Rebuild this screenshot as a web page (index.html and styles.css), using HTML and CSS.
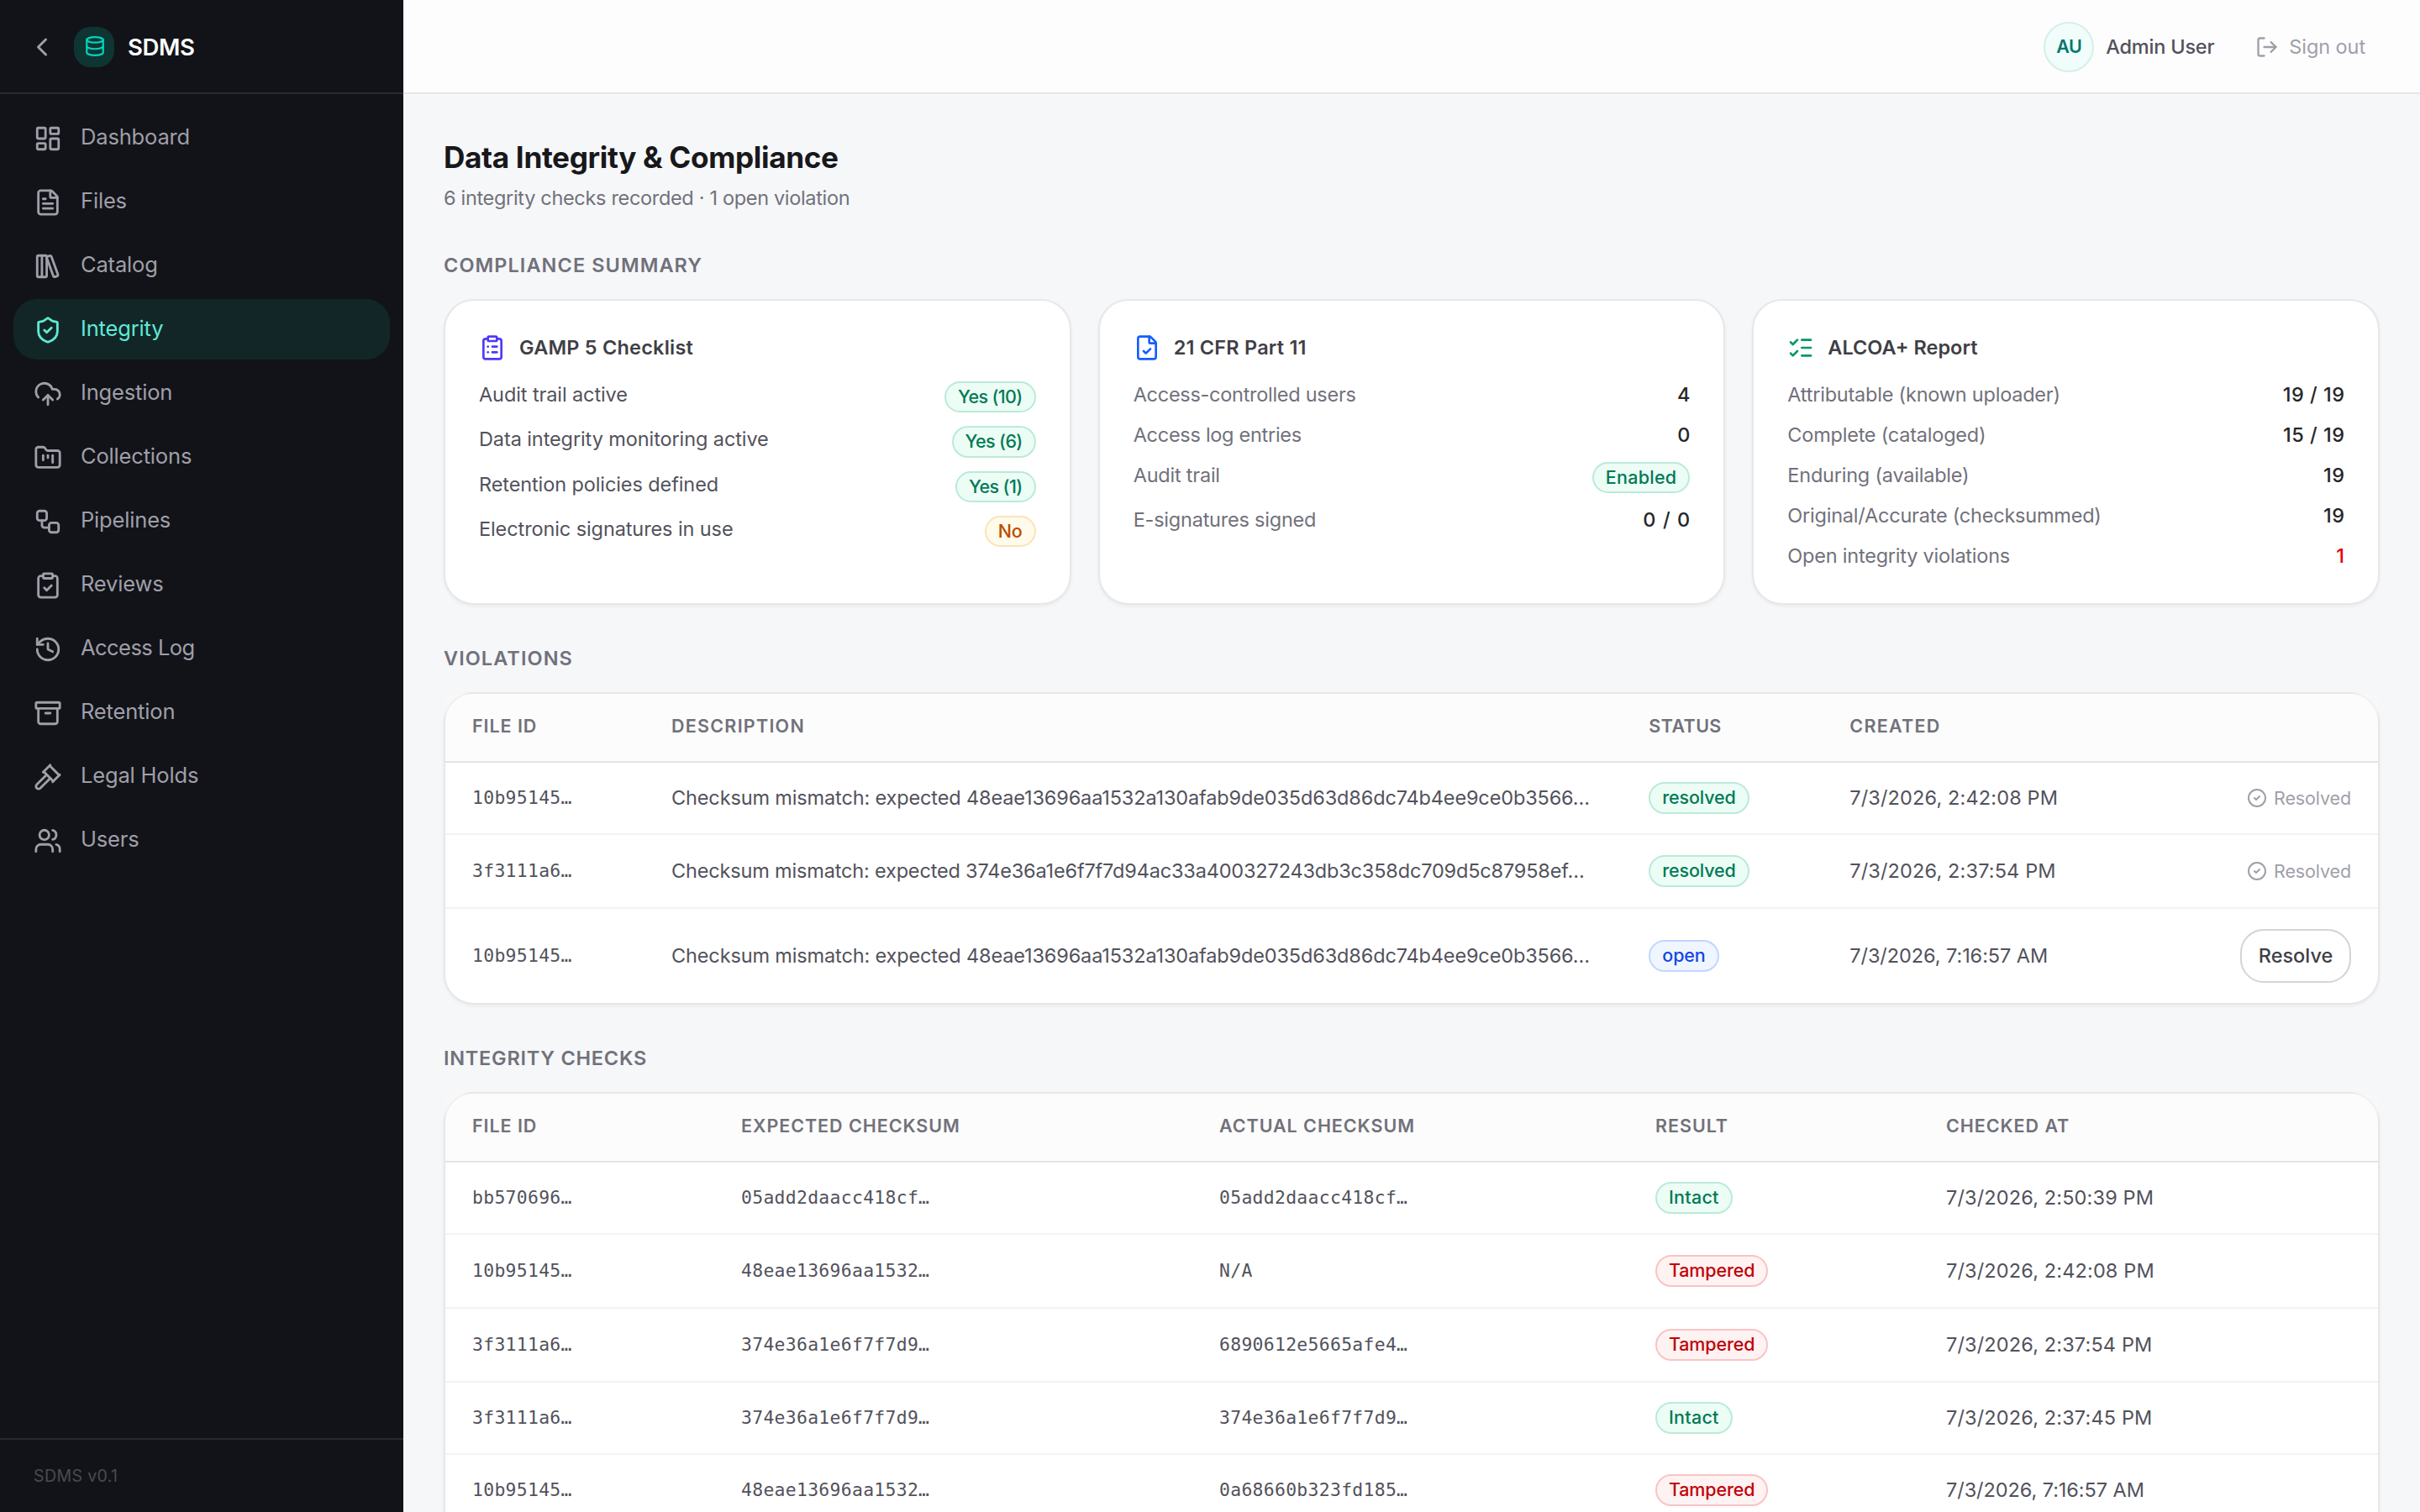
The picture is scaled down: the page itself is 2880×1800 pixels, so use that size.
FILE: index.html
```html
<!DOCTYPE html>
<html lang="en">
<head>
<meta charset="utf-8">
<title>SDMS – Data Integrity &amp; Compliance</title>
<link rel="stylesheet" href="styles.css">
</head>
<body>
<svg class="sprite" aria-hidden="true">
  <symbol id="chevron-left" viewBox="0 0 24 24"><path d="m15 18-6-6 6-6"/></symbol>
  <symbol id="database" viewBox="0 0 24 24"><ellipse cx="12" cy="5" rx="9" ry="3"/><path d="M3 5V19A9 3 0 0 0 21 19V5"/><path d="M3 12A9 3 0 0 0 21 12"/></symbol>
  <symbol id="dashboard" viewBox="0 0 24 24"><rect width="7" height="9" x="3" y="3" rx="1"/><rect width="7" height="5" x="14" y="3" rx="1"/><rect width="7" height="9" x="14" y="12" rx="1"/><rect width="7" height="5" x="3" y="16" rx="1"/></symbol>
  <symbol id="file-text" viewBox="0 0 24 24"><path d="M6 22a2 2 0 0 1-2-2V4a2 2 0 0 1 2-2h8a2.4 2.4 0 0 1 1.704.706l3.588 3.588A2.4 2.4 0 0 1 20 8v12a2 2 0 0 1-2 2z"/><path d="M14 2v5a1 1 0 0 0 1 1h5"/><path d="M10 9H8"/><path d="M16 13H8"/><path d="M16 17H8"/></symbol>
  <symbol id="library" viewBox="0 0 24 24"><rect width="8" height="18" x="3" y="3" rx="1"/><path d="M7 3v18"/><path d="M20.4 18.9c.2.5-.1 1.1-.6 1.3l-1.9.7c-.5.2-1.1-.1-1.3-.6L11.1 5.1c-.2-.5.1-1.1.6-1.3l1.9-.7c.5-.2 1.1.1 1.3.6Z"/></symbol>
  <symbol id="shield-check" viewBox="0 0 24 24"><path d="M20 13c0 5-3.5 7.5-7.66 8.95a1 1 0 0 1-.67-.01C7.5 20.5 4 18 4 13V6a1 1 0 0 1 1-1c2 0 4.5-1.2 6.24-2.72a1.17 1.17 0 0 1 1.52 0C14.51 3.81 17 5 19 5a1 1 0 0 1 1 1z"/><path d="m9 12 2 2 4-4"/></symbol>
  <symbol id="cloud-upload" viewBox="0 0 24 24"><path d="M12 13v8"/><path d="M4 14.899A7 7 0 1 1 15.71 8h1.79a4.5 4.5 0 0 1 2.5 8.242"/><path d="m8 17 4-4 4 4"/></symbol>
  <symbol id="folder-kanban" viewBox="0 0 24 24"><path d="M4 20h16a2 2 0 0 0 2-2V8a2 2 0 0 0-2-2h-7.93a2 2 0 0 1-1.66-.9l-.82-1.2A2 2 0 0 0 7.93 3H4a2 2 0 0 0-2 2v13c0 1.1.9 2 2 2Z"/><path d="M8 10v4"/><path d="M12 10v2"/><path d="M16 10v6"/></symbol>
  <symbol id="workflow" viewBox="0 0 24 24"><rect width="8" height="8" x="3" y="3" rx="2"/><path d="M7 11v4a2 2 0 0 0 2 2h4"/><rect width="8" height="8" x="13" y="13" rx="2"/></symbol>
  <symbol id="clipboard-check" viewBox="0 0 24 24"><rect width="8" height="4" x="8" y="2" rx="1"/><path d="M16 4h2a2 2 0 0 1 2 2v14a2 2 0 0 1-2 2H6a2 2 0 0 1-2-2V6a2 2 0 0 1 2-2h2"/><path d="m9 14 2 2 4-4"/></symbol>
  <symbol id="history" viewBox="0 0 24 24"><path d="M3 12a9 9 0 1 0 9-9 9.75 9.75 0 0 0-6.74 2.74L3 8"/><path d="M3 3v5h5"/><path d="M12 7v5l4 2"/></symbol>
  <symbol id="archive" viewBox="0 0 24 24"><rect width="20" height="5" x="2" y="3" rx="1"/><path d="M4 8v11a2 2 0 0 0 2 2h12a2 2 0 0 0 2-2V8"/><path d="M10 12h4"/></symbol>
  <symbol id="gavel" viewBox="0 0 24 24"><path d="m14 13-8.381 8.38a1 1 0 0 1-3.001-3l8.384-8.381"/><path d="m16 16 6-6"/><path d="m21.5 10.5-8-8"/><path d="m8 8 6-6"/><path d="m8.5 7.5 8 8"/></symbol>
  <symbol id="users" viewBox="0 0 24 24"><path d="M16 21v-2a4 4 0 0 0-4-4H6a4 4 0 0 0-4 4v2"/><path d="M16 3.128a4 4 0 0 1 0 7.744"/><path d="M22 21v-2a4 4 0 0 0-3-3.87"/><circle cx="9" cy="7" r="4"/></symbol>
  <symbol id="log-out" viewBox="0 0 24 24"><path d="m16 17 5-5-5-5"/><path d="M21 12H9"/><path d="M9 21H5a2 2 0 0 1-2-2V5a2 2 0 0 1 2-2h4"/></symbol>
  <symbol id="clipboard-list" viewBox="0 0 24 24"><rect width="8" height="4" x="8" y="2" rx="1"/><path d="M16 4h2a2 2 0 0 1 2 2v14a2 2 0 0 1-2 2H6a2 2 0 0 1-2-2V6a2 2 0 0 1 2-2h2"/><path d="M12 11h4"/><path d="M12 16h4"/><path d="M8 11h.01"/><path d="M8 16h.01"/></symbol>
  <symbol id="file-check" viewBox="0 0 24 24"><path d="M6 22a2 2 0 0 1-2-2V4a2 2 0 0 1 2-2h8a2.4 2.4 0 0 1 1.704.706l3.588 3.588A2.4 2.4 0 0 1 20 8v12a2 2 0 0 1-2 2z"/><path d="M14 2v5a1 1 0 0 0 1 1h5"/><path d="m9 15 2 2 4-4"/></symbol>
  <symbol id="list-checks" viewBox="0 0 24 24"><path d="M13 5h8"/><path d="M13 12h8"/><path d="M13 19h8"/><path d="m3 17 2 2 4-4"/><path d="m3 7 2 2 4-4"/></symbol>
  <symbol id="circle-check" viewBox="0 0 24 24"><circle cx="12" cy="12" r="10"/><path d="m9 12 2 2 4-4"/></symbol>
</svg>

<div class="app">
  <aside class="sidebar">
    <div class="brand">
      <svg class="icon brand-back"><use href="#chevron-left"/></svg>
      <span class="brand-logo"><svg class="icon"><use href="#database"/></svg></span>
      <span class="brand-name">SDMS</span>
    </div>
    <nav class="nav">
      <a class="nav-item"><svg class="icon"><use href="#dashboard"/></svg><span>Dashboard</span></a>
      <a class="nav-item"><svg class="icon"><use href="#file-text"/></svg><span>Files</span></a>
      <a class="nav-item"><svg class="icon"><use href="#library"/></svg><span>Catalog</span></a>
      <a class="nav-item is-active"><svg class="icon"><use href="#shield-check"/></svg><span>Integrity</span></a>
      <a class="nav-item"><svg class="icon"><use href="#cloud-upload"/></svg><span>Ingestion</span></a>
      <a class="nav-item"><svg class="icon"><use href="#folder-kanban"/></svg><span>Collections</span></a>
      <a class="nav-item"><svg class="icon"><use href="#workflow"/></svg><span>Pipelines</span></a>
      <a class="nav-item"><svg class="icon"><use href="#clipboard-check"/></svg><span>Reviews</span></a>
      <a class="nav-item"><svg class="icon"><use href="#history"/></svg><span class="tight">Access Log</span></a>
      <a class="nav-item"><svg class="icon"><use href="#archive"/></svg><span>Retention</span></a>
      <a class="nav-item"><svg class="icon"><use href="#gavel"/></svg><span>Legal Holds</span></a>
      <a class="nav-item"><svg class="icon"><use href="#users"/></svg><span>Users</span></a>
    </nav>
    <div class="sidebar-footer">SDMS v0.1</div>
  </aside>

  <div class="main">
    <header class="topbar">
      <span class="avatar">AU</span>
      <span class="user-name">Admin User</span>
      <a class="sign-out"><svg class="icon"><use href="#log-out"/></svg><span>Sign out</span></a>
    </header>

    <main class="content">
      <h1 class="page-title">Data Integrity &amp; Compliance</h1>
      <p class="page-subtitle">6 integrity checks recorded · 1 open violation</p>

      <section class="section">
        <h2 class="section-title">Compliance Summary</h2>
        <div class="cards">
          <article class="card card-plain">
            <h3 class="card-title"><svg class="icon icon-indigo"><use href="#clipboard-list"/></svg><span>GAMP 5 Checklist</span></h3>
            <div class="stat"><span>Audit trail active</span><span class="badge badge-yes green">Yes (10)</span></div>
            <div class="stat"><span>Data integrity monitoring active</span><span class="badge badge-yes green">Yes (6)</span></div>
            <div class="stat"><span>Retention policies defined</span><span class="badge badge-yes green">Yes (1)</span></div>
            <div class="stat"><span>Electronic signatures in use</span><span class="badge amber">No</span></div>
          </article>
          <article class="card">
            <h3 class="card-title"><svg class="icon icon-blue"><use href="#file-check"/></svg><span>21 CFR Part 11</span></h3>
            <div class="stat"><span class="tight">Access-controlled users</span><b>4</b></div>
            <div class="stat"><span class="tight">Access log entries</span><b>0</b></div>
            <div class="stat"><span>Audit trail</span><span class="badge badge-wide green">Enabled</span></div>
            <div class="stat"><span>E-signatures signed</span><b class="zeros">0 / 0</b></div>
          </article>
          <article class="card">
            <h3 class="card-title alcoa"><svg class="icon icon-green"><use href="#list-checks"/></svg><span>ALCOA+ Report</span></h3>
            <div class="stat"><span>Attributable (known uploader)</span><b>19 / 19</b></div>
            <div class="stat"><span>Complete (cataloged)</span><b>15 / 19</b></div>
            <div class="stat"><span>Enduring (available)</span><b>19</b></div>
            <div class="stat"><span>Original/Accurate (checksummed)</span><b>19</b></div>
            <div class="stat"><span>Open integrity violations</span><b class="danger">1</b></div>
          </article>
        </div>
      </section>

      <section class="section">
        <h2 class="section-title">Violations</h2>
        <div class="table violations">
          <div class="row head"><span>File ID</span><span class="wide">Description</span><span class="narrow">Status</span><span class="wide">Created</span><span></span></div>
          <div class="row"><code>10b95145…</code><span class="desc">Checksum mismatch: expected 48eae13696aa1532a130afab9de035d63d86dc74b4ee9ce0b3566…</span><span><span class="badge green">resolved</span></span><time>7/3/2026, 2:42:08 PM</time><span class="action"><span class="done"><svg class="icon"><use href="#circle-check"/></svg>Resolved</span></span></div>
          <div class="row tall"><code>3f3111a6…</code><span class="desc desc-narrow">Checksum mismatch: expected 374e36a1e6f7f7d94ac33a400327243db3c358dc709d5c87958ef…</span><span><span class="badge green">resolved</span></span><time>7/3/2026, 2:37:54 PM</time><span class="action"><span class="done"><svg class="icon"><use href="#circle-check"/></svg>Resolved</span></span></div>
          <div class="row open"><code>10b95145…</code><span class="desc">Checksum mismatch: expected 48eae13696aa1532a130afab9de035d63d86dc74b4ee9ce0b3566…</span><span><span class="badge blue">open</span></span><time class="am">7/3/2026, 7:16:57 AM</time><span class="action"><button class="button">Resolve</button></span></div>
        </div>
      </section>

      <section class="section">
        <h2 class="section-title narrow">Integrity Checks</h2>
        <div class="table checks">
          <div class="row head"><span>File ID</span><span>Expected Checksum</span><span>Actual Checksum</span><span>Result</span><span>Checked At</span></div>
          <div class="row"><code>bb570696…</code><code>05add2daacc418cf…</code><code>05add2daacc418cf…</code><span><span class="badge badge-wide green">Intact</span></span><time>7/3/2026, 2:50:39 PM</time></div>
          <div class="row tall"><code>10b95145…</code><code>48eae13696aa1532…</code><code>N/A</code><span><span class="badge red">Tampered</span></span><time>7/3/2026, 2:42:08 PM</time></div>
          <div class="row tall"><code>3f3111a6…</code><code>374e36a1e6f7f7d9…</code><code>6890612e5665afe4…</code><span><span class="badge red">Tampered</span></span><time>7/3/2026, 2:37:54 PM</time></div>
          <div class="row"><code>3f3111a6…</code><code>374e36a1e6f7f7d9…</code><code>374e36a1e6f7f7d9…</code><span><span class="badge badge-wide green">Intact</span></span><time>7/3/2026, 2:37:45 PM</time></div>
          <div class="row"><code>10b95145…</code><code>48eae13696aa1532…</code><code>0a68660b323fd185…</code><span><span class="badge red">Tampered</span></span><time class="am">7/3/2026, 7:16:57 AM</time></div>
        </div>
      </section>
    </main>
  </div>
</div>
</body>
</html>
```
FILE: styles.css
```css
:root {
  --line: #e7e7ea;
  --zinc-400: #9f9fa9;
  --zinc-500: #71717b;
  --zinc-600: #52525c;
  --zinc-700: #3f3f46;
}

* { box-sizing: border-box; }

body {
  margin: 0;
  height: 1800px;
  overflow: hidden;
  background: #f6f7f9;
  color: #18181b;
  font-family: Inter, "Liberation Sans", sans-serif;
  font-size: 23.5px;
  line-height: 32px;
}

h1, h2, h3, p { margin: 0; }

.sprite { position: absolute; width: 0; height: 0; }

.icon {
  display: block;
  flex: none;
  fill: none;
  stroke: currentColor;
  stroke-width: 2;
  stroke-linecap: round;
  stroke-linejoin: round;
}

.app { display: flex; height: 1800px; overflow: hidden; }

/* Sidebar */
.sidebar {
  display: flex;
  flex-direction: column;
  flex: none;
  width: 480px;
  background: #121318;
}

.brand {
  display: flex;
  align-items: center;
  height: 112px;
  padding: 2px 32px 0;
  border-bottom: 2px solid #292a2f;
}

.brand-back { width: 36px; height: 36px; color: var(--zinc-400); }

.brand-logo {
  display: grid;
  place-items: center;
  width: 48px;
  height: 48px;
  margin: 0 20px;
  padding: 0 0 2px 2px;
  border-radius: 20px;
  background: #0f3533;
  color: #00d5be;
}

.brand-logo .icon { width: 26px; height: 26px; }

.brand-name {
  margin-left: -4px;
  color: #fff;
  font-size: 27.5px;
  font-weight: 600;
  letter-spacing: -0.37px;
}

.nav {
  display: flex;
  flex-direction: column;
  flex: 1;
  gap: 4px;
  padding: 16px;
}

.nav-item {
  display: flex;
  align-items: center;
  gap: 22px;
  height: 72px;
  padding: 0 24px;
  border-radius: 28px;
  color: var(--zinc-400);
  font-size: 25.5px;
  letter-spacing: -0.17px;
}

.nav-item .icon { width: 34px; height: 34px; margin-top: 2px; }
.nav-item span { margin-top: -2px; }
.nav-item .tight { letter-spacing: -0.54px; }
.nav-item.is-active { background: #122628; color: #5ee9d5; }

.sidebar-footer {
  height: 88px;
  padding: 27px 40px;
  border-top: 2px solid #292a2f;
  color: #4a4a53;
  font-size: 19.5px;
  letter-spacing: 0.4px;
}

/* Top bar */
.main { display: flex; flex-direction: column; flex: 1; min-width: 0; overflow: hidden; }

.topbar {
  display: flex;
  align-items: center;
  justify-content: flex-end;
  flex: none;
  height: 112px;
  padding: 2px 65px 0;
  border-bottom: 2px solid var(--line);
  background: #fdfdfd;
}

.avatar {
  display: grid;
  place-items: center;
  width: 60px;
  height: 60px;
  padding-bottom: 3px;
  border: 2px solid #d5efeb;
  border-radius: 50%;
  background: #f0fdfa;
  color: #00786f;
  font-size: 21.5px;
  font-weight: 600;
  letter-spacing: -0.6px;
}

.user-name {
  margin-left: 14px;
  color: var(--zinc-600);
  font-weight: 500;
  letter-spacing: -0.2px;
}

.sign-out {
  display: flex;
  align-items: center;
  gap: 12px;
  margin-left: 49px;
  color: var(--zinc-400);
  letter-spacing: -0.09px;
}

.sign-out .icon { width: 28px; height: 28px; }

/* Page */
.content { padding: 48px 48px 0; }

.page-title {
  font-size: 35.2px;
  font-weight: 700;
  line-height: 54px;
  letter-spacing: -0.36px;
}

.page-subtitle {
  margin-top: 6px;
  color: var(--zinc-500);
  letter-spacing: -0.325px;
}

.section { margin-top: 48px; }

.section-title {
  margin-bottom: 24px;
  color: var(--zinc-500);
  font-size: 23.5px;
  font-weight: 600;
  letter-spacing: 1.07px;
  text-transform: uppercase;
}

.section-title.narrow { letter-spacing: 0.75px; }

/* Summary cards */
.cards { display: grid; grid-template-columns: repeat(3, 1fr); gap: 32px; }

.card {
  display: flex;
  flex-direction: column;
  gap: 16px;
  height: 364px;
  padding: 40px;
  border: 2px solid var(--line);
  border-radius: 36px;
  background: #fff;
  box-shadow: 0 2px 4px rgba(24, 24, 27, 0.05);
}

.card-title {
  display: flex;
  gap: 16px;
  margin-bottom: 8px;
  color: var(--zinc-700);
  font-size: 23.5px;
  font-weight: 600;
  letter-spacing: 0.21px;
}

.card-title.alcoa { letter-spacing: 0; }
.card-title .icon { width: 32px; height: 32px; }
.icon-indigo { color: #4f39f6; }
.icon-blue { color: #155dfc; }
.icon-green { color: #009966; }

.stat {
  display: flex;
  justify-content: space-between;
  align-items: flex-start;
  color: var(--zinc-500);
  letter-spacing: -0.22px;
}

.card-plain .stat { color: var(--zinc-600); letter-spacing: -0.1px; }
.stat .tight { letter-spacing: -0.28px; }

.stat b {
  color: #27272a;
  font-weight: 500;
  letter-spacing: 0.5px;
  margin-right: -0.5px;
}

.stat .zeros { letter-spacing: 1.1px; margin-right: -1px; }
.stat .danger { color: #e7000b; }

/* Status badges */
.badge {
  display: inline-block;
  padding: 2px 14px;
  border: 2px solid;
  border-radius: 999px;
  font-size: 21.5px;
  font-weight: 500;
  line-height: 29.33px;
  letter-spacing: -0.15px;
}

.badge-wide { letter-spacing: 0.25px; }
.stat .badge-yes { letter-spacing: -0.62px; }
.green { background: #ecfdf5; border-color: #bbead8; color: #007a55; }
.amber { background: #fffbeb; border-color: #fbe2b9; color: #bb4d00; }
.blue { background: #eff6ff; border-color: #c1d6ff; color: #1447e6; }
.red { background: #fef2f2; border-color: #fac3c4; color: #c10007; }

/* Tables */
.table {
  border: 2px solid var(--line);
  border-radius: 36px;
  background: #fff;
  box-shadow: 0 2px 4px rgba(24, 24, 27, 0.05);
}

.row {
  display: grid;
  align-items: center;
  height: 86px;
  padding: 0 32px;
  border-bottom: 2px solid #f3f3f5;
  color: var(--zinc-600);
}

.violations .row { grid-template-columns: 237px 1163.3px 239px 1fr auto; }
.checks { padding-bottom: 88px; }
.checks .row { grid-template-columns: 320px 569px 519px 346px 1fr; }
.violations .row:last-child { border-bottom: 0; }
.row.tall { height: 88px; }
.row.open { height: 112px; }

/* The header fill is translucent and square, so it tints the area around the rounded corners. */
.row.head {
  align-items: start;
  height: 82px;
  padding-top: 24px;
  border-bottom-color: #e4e4e6;
  background: rgba(250, 250, 250, 0.5);
  color: var(--zinc-500);
  font-size: 21.5px;
  font-weight: 600;
  line-height: 29px;
  letter-spacing: 0.95px;
  text-transform: uppercase;
}

.row.head .wide { letter-spacing: 1.25px; }
.row.head .narrow { letter-spacing: 0.4px; }

.row code {
  font-family: "DejaVu Sans Mono", "Liberation Mono", monospace;
  font-size: 21.4px;
  letter-spacing: 0.316px;
}

.desc { white-space: nowrap; letter-spacing: -0.14px; }
.desc-narrow { letter-spacing: -0.17px; }
.row time { letter-spacing: 0.14px; }
.row time.am { letter-spacing: -0.07px; }

.done {
  display: flex;
  align-items: center;
  gap: 8px;
  color: var(--zinc-400);
  font-size: 21.5px;
  letter-spacing: -0.12px;
}

.done .icon { width: 24px; height: 24px; }

.button {
  display: block;
  width: 132px;
  height: 64px;
  padding: 0;
  border: 2px solid #d4d4d8;
  border-radius: 28px;
  background: #fff;
  color: var(--zinc-700);
  font: 500 23.5px/32px Inter, "Liberation Sans", sans-serif;
}
```
